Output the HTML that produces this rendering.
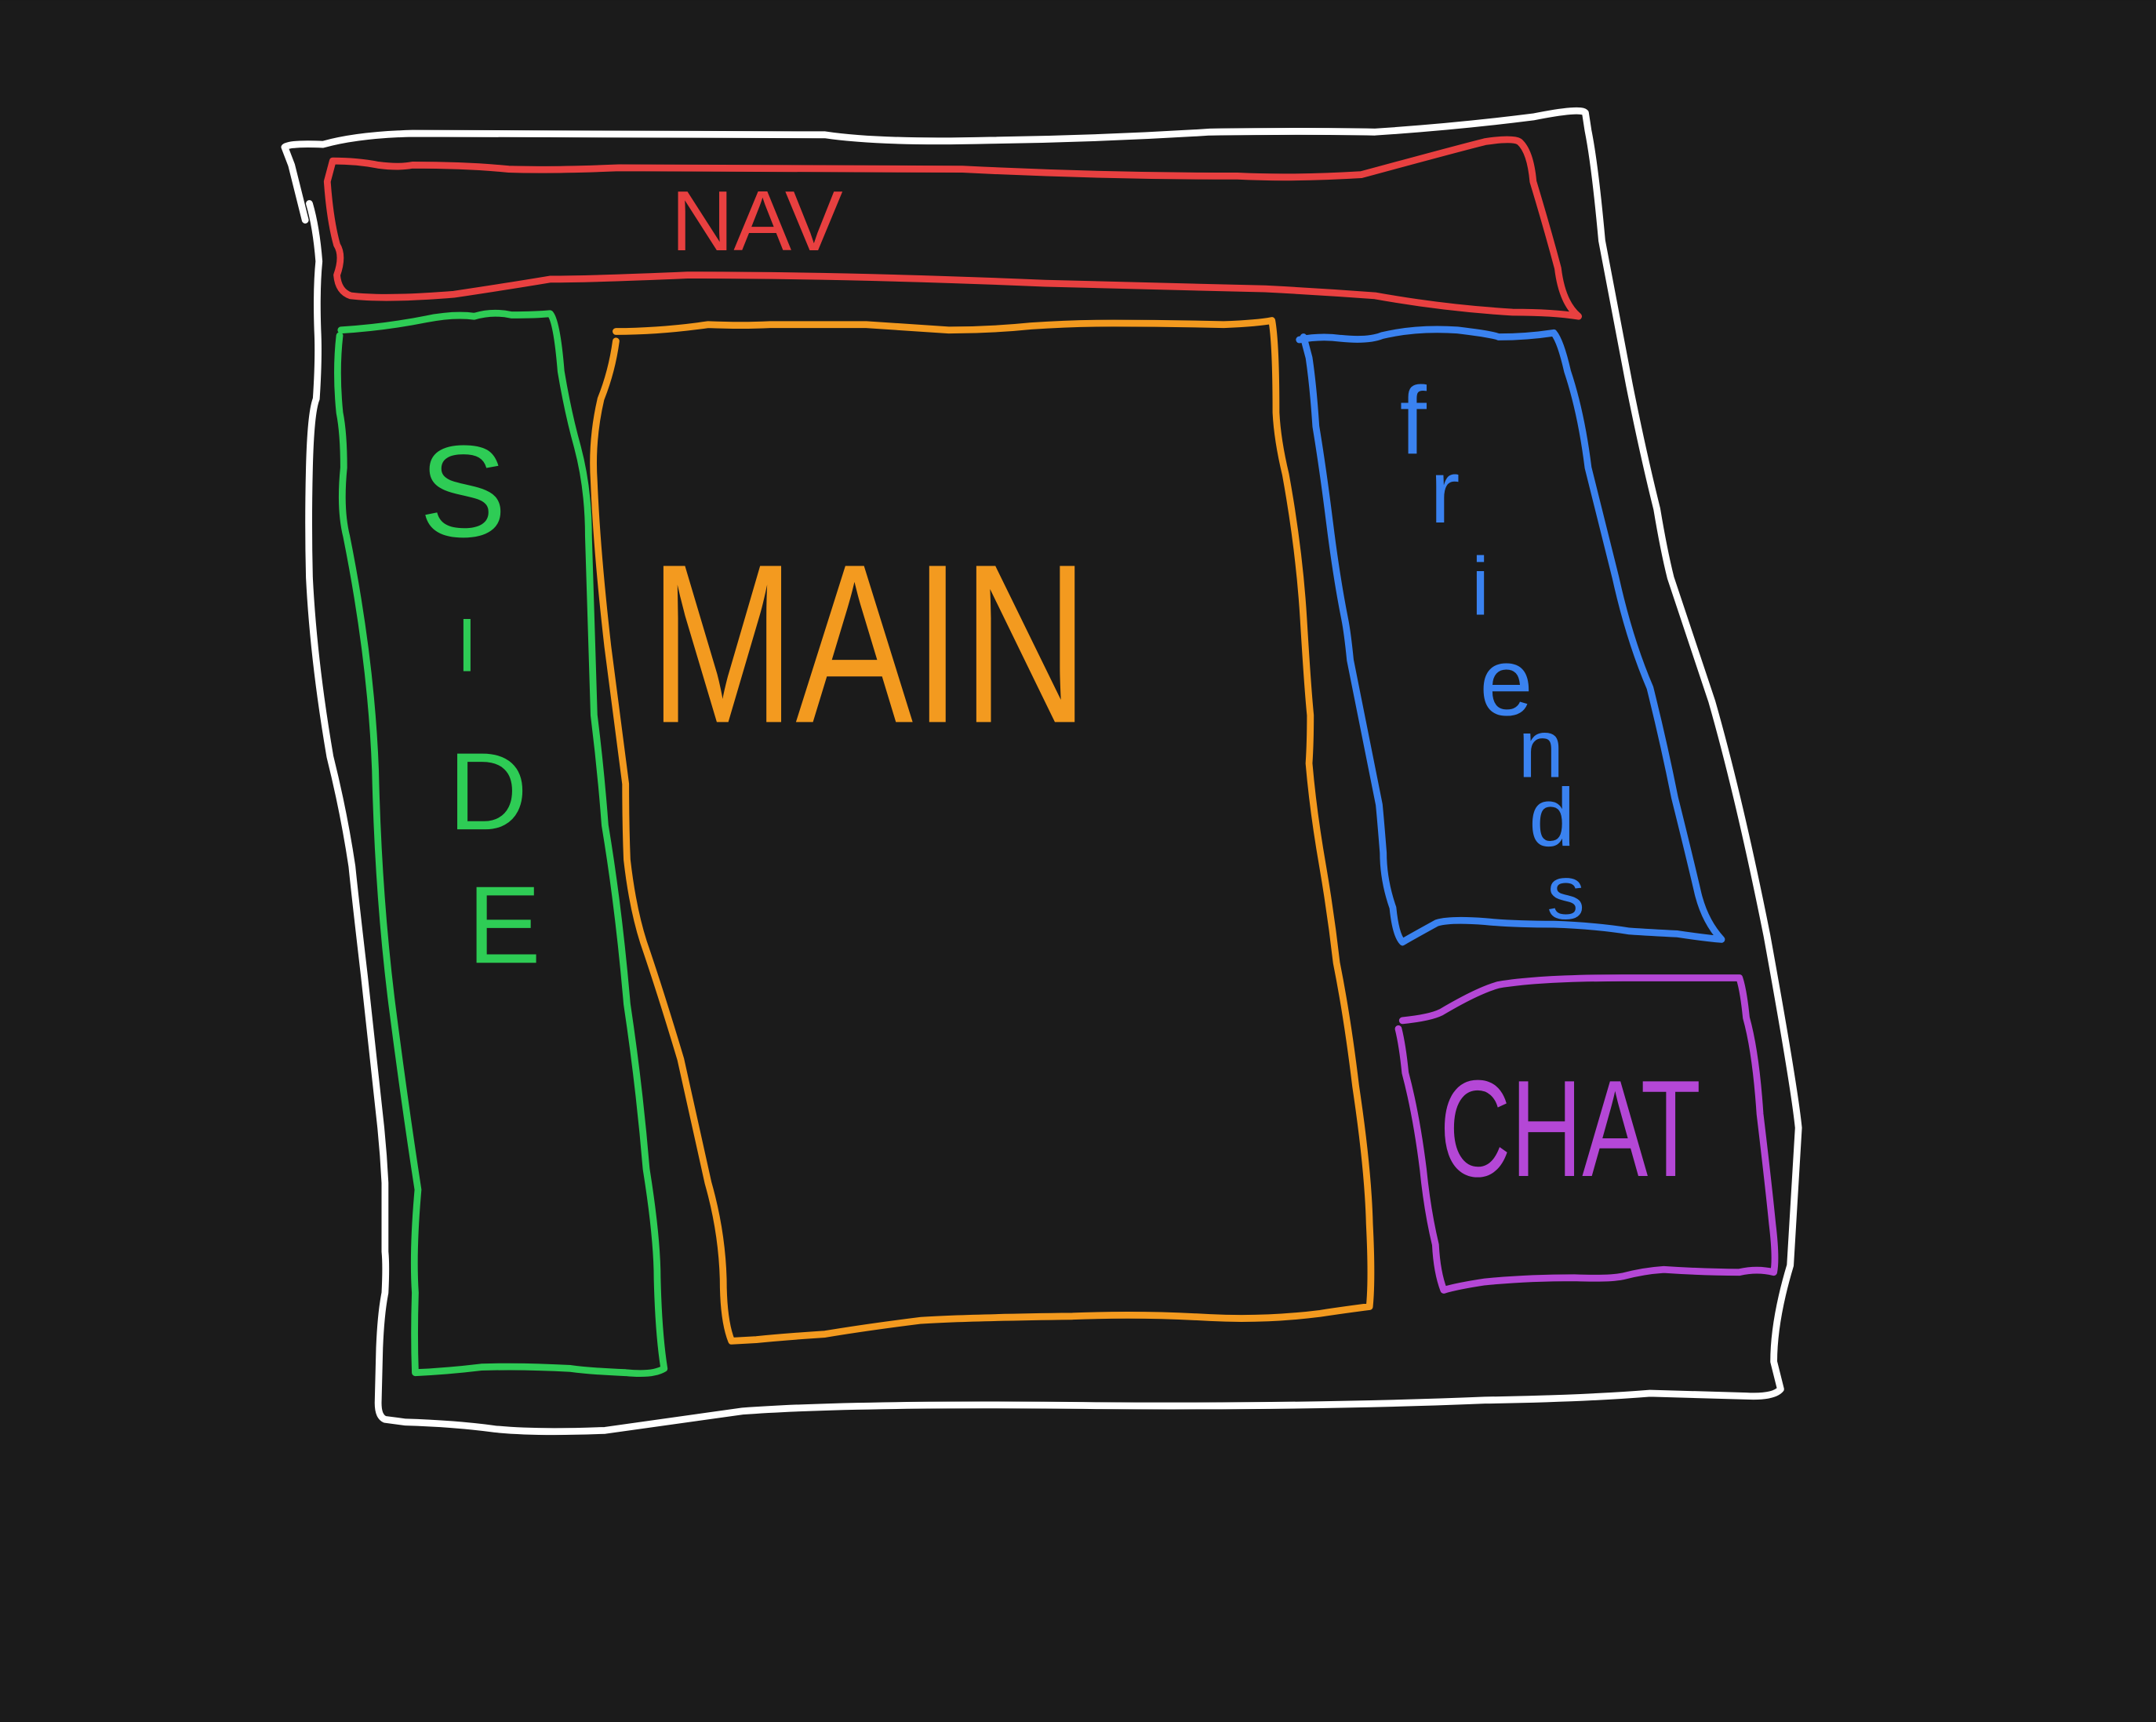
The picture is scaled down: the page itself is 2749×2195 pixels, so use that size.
<!DOCTYPE html>
<html><head><meta charset="utf-8"><style>
html,body{margin:0;padding:0;background:#1b1b1b;width:2749px;height:2195px;overflow:hidden}
svg{display:block}
text{font-family:"Liberation Sans",sans-serif}
</style></head><body>
<svg width="2749" height="2195" viewBox="0 0 1568 1252" xmlns="http://www.w3.org/2000/svg">
<rect width="1568" height="1252" fill="#1b1b1b"/>
<g fill="none" stroke-width="5" stroke-linecap="round" stroke-linejoin="round">
<path stroke="#ffffff" d="M222,160 L212,120 L207,107 Q210,104 235,105 Q260,98 300,97 L600,98 Q640,104 720,102 Q800,101 880,96 Q950,95 1000,96 Q1060,92 1115,85 Q1150,78 1153,82 L1155,95 Q1160,120 1165,175 L1185,280 Q1195,330 1205,370 Q1210,400 1215,420 L1245,510 Q1265,580 1285,680 Q1305,790 1308,820 L1302,920 Q1290,960 1290,990 L1295,1010 Q1290,1016 1270,1015 L1200,1013 Q1150,1017 1080,1018 Q960,1023 800,1022 Q620,1020 540,1026 L440,1040 Q390,1042 360,1039 Q330,1035 295,1034 L280,1032 Q275,1030 275,1020 L276,980 Q277,955 280,940 Q281,920 280,910 L280,860 Q279,840 277,820 L265,710 Q258,650 256,630 Q250,590 240,550 Q228,480 225,420 Q224,380 225,340 Q226,300 230,290 Q232,260 231,240 Q230,210 232,190 Q230,165 225,148"/>
<path stroke="#e84040" d="M242,117 Q260,117 275,120 Q290,122 300,120 Q340,120 370,123 Q400,124 450,122 L700,123 Q800,128 900,128 Q940,130 990,127 Q1060,108 1080,103 Q1100,100 1105,103 Q1113,110 1115,132 Q1125,165 1133,195 Q1136,220 1148,230 Q1130,227 1100,227 Q1050,224 1000,215 Q960,212 920,210 Q850,208 760,206 Q620,200 500,200 Q430,203 400,203 Q370,208 330,214 Q280,218 255,215 Q246,212 245,200 Q250,186 245,178 Q240,160 238,132 Z"/>
<path stroke="#2ecc55" d="M248,240 Q280,238 310,232 Q330,228 345,230 Q358,226 372,229 Q390,229 400,228 Q405,233 408,270 Q413,300 420,325 Q428,355 428,390 Q430,460 432,520 Q437,560 440,600 Q450,660 456,730 Q465,790 470,850 Q478,900 478,930 Q479,970 483,995 Q475,1000 455,998 Q430,997 415,995 Q380,993 350,994 Q325,997 302,998 Q301,970 302,940 Q300,910 304,865 Q294,800 285,730 Q275,650 273,560 Q270,480 252,390 Q247,370 250,340 Q250,315 247,300 Q244,270 247,244"/>
<path stroke="#f39a1f" d="M448,241 Q480,241 515,236 Q540,237 560,236 L630,236 Q660,238 690,240 Q720,240 750,237 Q780,235 810,235 Q850,235 890,236 Q915,235 925,233 Q928,250 928,300 Q929,320 935,345 Q945,400 948,450 Q951,500 953,520 Q953,540 952,555 Q955,590 962,630 Q968,665 972,700 Q980,740 986,790 Q995,850 996,890 Q998,930 996,950 Q980,952 960,955 Q920,960 880,958 Q830,955 780,957 Q700,958 670,960 Q630,965 600,970 Q570,972 550,974 L532,975 Q526,960 526,930 Q525,895 515,860 Q505,815 495,770 Q480,720 468,685 Q460,660 456,625 Q455,600 455,570 Q450,530 442,470 Q434,400 432,350 Q430,320 437,290 Q445,270 448,248"/>
<path stroke="#3a82f0" d="M945,247 Q960,244 975,246 Q995,248 1005,244 Q1030,238 1060,240 Q1085,243 1090,245 Q1110,245 1130,242 Q1135,248 1140,270 Q1150,300 1155,340 Q1165,380 1175,420 Q1185,465 1200,500 Q1210,540 1218,580 Q1228,620 1235,650 Q1240,670 1252,683 Q1240,682 1220,679 Q1200,678 1185,677 Q1160,673 1130,672 Q1100,672 1080,670 Q1055,668 1045,671 Q1025,682 1020,685 Q1015,680 1013,660 Q1006,640 1006,620 Q1004,595 1003,585 Q992,530 982,480 Q980,460 978,450 Q972,420 967,380 Q962,340 957,310 Q955,280 952,260 L948,245"/>
<path stroke="#b447d6" d="M1020,742 Q1040,740 1048,736 Q1075,720 1090,716 Q1120,711 1180,711 L1265,711 Q1268,720 1270,740 Q1277,765 1280,810 Q1286,860 1289,890 Q1292,915 1290,925 Q1278,922 1265,925 Q1240,925 1210,923 Q1195,924 1180,928 Q1170,930 1145,929 Q1110,929 1080,932 Q1060,935 1050,938 Q1045,925 1044,905 Q1038,880 1035,850 Q1030,810 1022,780 Q1020,760 1017,748"/>
</g>
<g font-weight="normal">
<text x="488" y="182" font-size="62" fill="#e84040" textLength="125" lengthAdjust="spacingAndGlyphs">NAV</text>
<text x="472" y="525" font-size="165" fill="#f39a1f" textLength="320" lengthAdjust="spacingAndGlyphs">MAIN</text>
<text x="1047" y="855" font-size="100" fill="#b447d6" textLength="190" lengthAdjust="spacingAndGlyphs">CHAT</text>
<text x="305" y="390" font-size="95" fill="#2ecc55">S</text>
<text x="332" y="488" font-size="55" fill="#2ecc55">I</text>
<text x="326" y="603" font-size="80" fill="#2ecc55">D</text>
<text x="340" y="700" font-size="80" fill="#2ecc55">E</text>
<text x="1018" y="330" font-size="70" fill="#3a82f0">f</text>
<text x="1040" y="380" font-size="65" fill="#3a82f0">r</text>
<text x="1070" y="447" font-size="60" fill="#3a82f0">i</text>
<text x="1076" y="520" font-size="70" fill="#3a82f0">e</text>
<text x="1104" y="565" font-size="60" fill="#3a82f0">n</text>
<text x="1112" y="615" font-size="60" fill="#3a82f0">d</text>
<text x="1125" y="668" font-size="55" fill="#3a82f0">s</text>
</g>
</svg>
</body></html>
